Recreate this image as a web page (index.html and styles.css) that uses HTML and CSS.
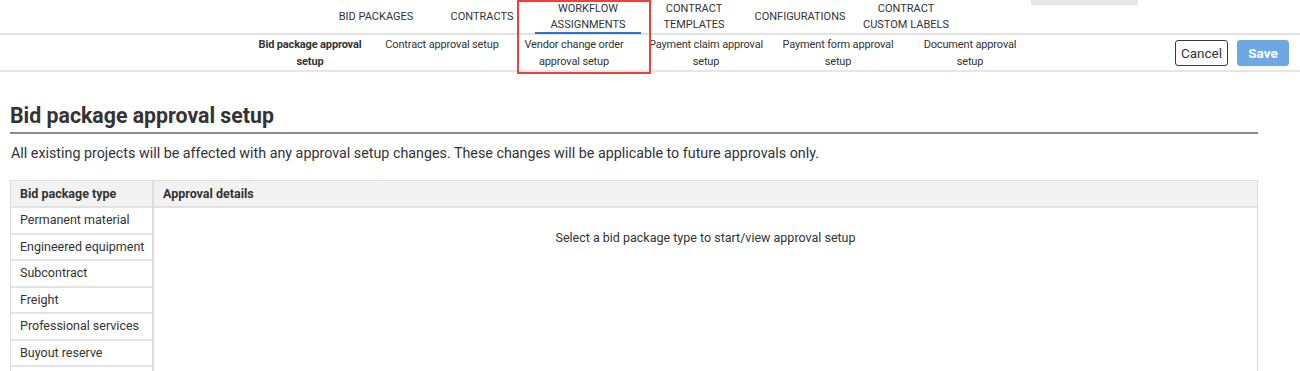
FILE: index.html
```html
<!doctype html>
<html lang="en">
<head>
    <meta charset="UTF-8">
    <title>Bid package approval setup</title>
    <link rel="stylesheet" href="styles.css">
</head>
<body>
<div class="header">
    <div class="tabs">
        <div class="tab">Bid packages</div>
        <div class="tab">Contracts</div>
        <div class="tab tab-active">Workflow assignments</div>
        <div class="tab">Contract templates</div>
        <div class="tab">Configurations</div>
        <div class="tab">Contract custom labels</div>
    </div>
    <div class="scroll-stub"></div>
    <div class="highlight"></div>

    <div class="subbar">
        <div class="subtabs">
            <div class="subtab subtab-active">Bid package approval setup</div>
            <div class="subtab">Contract approval setup</div>
            <div class="subtab">Vendor change order approval setup</div>
            <div class="subtab">Payment claim approval setup</div>
            <div class="subtab">Payment form approval setup</div>
            <div class="subtab">Document approval setup</div>
        </div>
        <div class="actions">
            <button class="button button-cancel">Cancel</button>
            <button class="button button-save">Save</button>
        </div>
    </div>
</div>

<div class="content">
    <h1 class="title">Bid package approval setup</h1>
    <p class="note">All existing projects will be affected with any approval setup changes. These changes will be applicable to future approvals only.</p>

    <div class="setup">
        <div class="types">
            <div class="types-head">Bid package type</div>
            <div class="type">Permanent material</div>
            <div class="type">Engineered equipment</div>
            <div class="type">Subcontract</div>
            <div class="type">Freight</div>
            <div class="type">Professional services</div>
            <div class="type">Buyout reserve</div>
            <div class="type"></div>
        </div>
        <div class="details">
            <div class="details-head">Approval details</div>
            <div class="details-empty">Select a bid package type to start/view approval setup</div>
        </div>
    </div>
</div>
</body>
</html>
```

FILE: styles.css
```css
body {
    margin: 0;
    font-family: Roboto, "Liberation Sans", sans-serif;
    color: #333;
    background: #fff;
    overflow: hidden;
}

.header {
    position: relative;
}

.tabs {
    display: flex;
    justify-content: center;
    padding-right: 18px;
    padding-top: 1px;
    height: 32px;
    border-bottom: 2px solid #e2e2e2;
}

.tab {
    width: 106px;
    display: flex;
    align-items: center;
    justify-content: center;
    text-align: center;
    text-transform: uppercase;
    font-size: 11px;
    line-height: 16px;
    padding: 0 10px;
    box-sizing: border-box;
}

.tab-active {
    border-bottom: 2px solid #2d6fd2;
    margin-bottom: -1px;
}

.scroll-stub {
    position: absolute;
    top: 0;
    left: 1031px;
    width: 107px;
    height: 5px;
    background: #e5e5e5;
}

.highlight {
    position: absolute;
    top: 0;
    left: 517px;
    width: 130px;
    height: 70px;
    border: 2px solid #e8413f;
}

.subbar {
    display: flex;
    align-items: center;
    height: 35px;
    border-bottom: 2px solid #e6e6e6;
}

.subtabs {
    flex: 1;
    display: flex;
    padding-left: 244px;
}

.subtab {
    width: 132px;
    box-sizing: border-box;
    padding: 0 8px;
    text-align: center;
    font-size: 11px;
    letter-spacing: -0.15px;
    line-height: 17px;
}

.subtab-active {
    font-weight: 700;
}

.actions {
    display: flex;
    gap: 9px;
    padding-right: 11px;
}

.button {
    height: 26px;
    font-family: inherit;
    font-size: 13.5px;
    border-radius: 3px;
    padding: 0;
    outline: none;
}

.button-cancel {
    width: 53px;
    background: #fff;
    color: #333;
    border: 1px solid #3a3a3a;
}

.button-save {
    width: 52px;
    background: #6ea8e2;
    color: #fff;
    font-weight: 700;
    border: 1px solid #6ea8e2;
}

.content {
    padding: 0 42px 0 10px;
}

.title {
    margin: 31px 0 0;
    font-size: 21.3px;
    line-height: 26px;
    font-weight: 700;
    color: #333;
    padding-bottom: 3px;
    border-bottom: 2px solid #8a8a8a;
}

.note {
    margin: 9px 0 0 1px;
    font-size: 14.3px;
    line-height: 20px;
}

.setup {
    display: flex;
    margin-top: 17px;
    border: 1px solid #dcdcdc;
    border-bottom: none;
}

.types {
    width: 141px;
    border-right: 2px solid #dcdcdc;
}

.types-head,
.details-head {
    height: 25px;
    line-height: 25px;
    background: #f2f2f2;
    border-bottom: 2px solid #e2e2e2;
    font-size: 12.5px;
    font-weight: 700;
    padding-left: 9px;
}

.type {
    height: 24.5px;
    line-height: 24px;
    border-bottom: 2px solid #e4e4e4;
    font-size: 12.5px;
    padding-left: 9px;
}

.details {
    flex: 1;
}

.details-empty {
    text-align: center;
    font-size: 12.5px;
    padding-top: 22px;
}
```
